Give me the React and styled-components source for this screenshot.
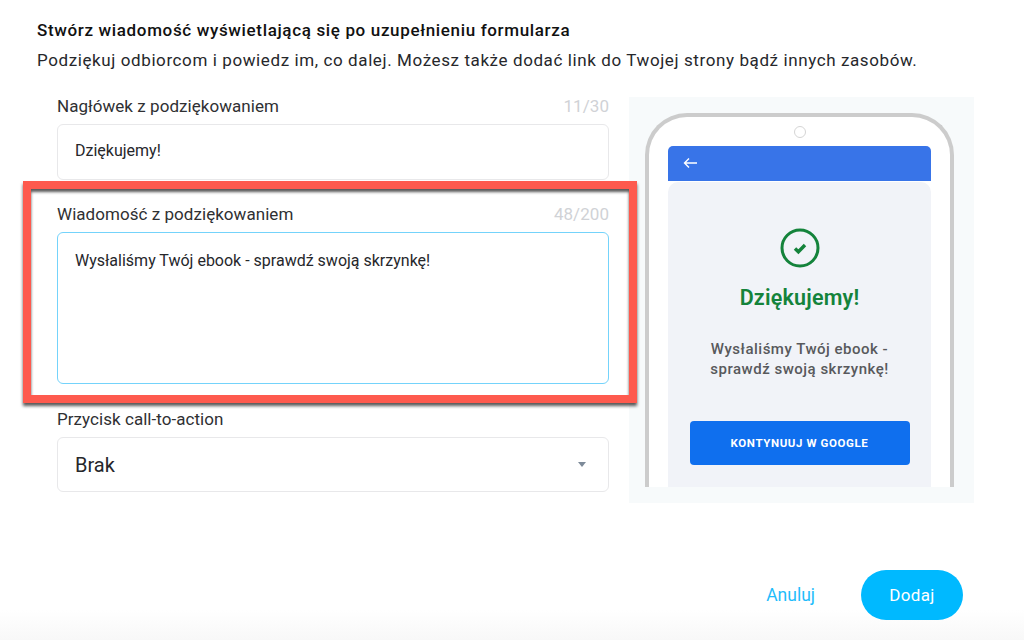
import React from 'react';
import styled, { createGlobalStyle } from 'styled-components';

const GlobalStyle = createGlobalStyle`
  html, body {
    margin: 0;
    padding: 0;
    background: #fff;
  }
  * {
    box-sizing: border-box;
  }
`;

const Page = styled.div`
  width: 1024px;
  height: 640px;
  overflow: hidden;
  padding: 20px 0 0 37px;
  display: flex;
  flex-direction: column;
  font-family: Roboto, "Liberation Sans", sans-serif;
  color: #1d1d1f;
  background: linear-gradient(to bottom, #fff 0, #fff 610px, #f8f8f8 640px);
`;

const Heading = styled.h1`
  margin: 0;
  font-size: 17px;
  line-height: 20px;
  font-weight: 500;
  color: #111;
  letter-spacing: 0.65px;
`;

const Intro = styled.p`
  margin: 10px 0 0;
  font-size: 17px;
  line-height: 20px;
  font-weight: 400;
  color: #26272b;
  letter-spacing: 0.6px;
`;

const Columns = styled.div`
  display: flex;
  align-items: flex-start;
  gap: 20px;
  margin: 27px 0 0 20px;
`;

const Form = styled.div`
  width: 552px;
  display: flex;
  flex-direction: column;
`;

const Field = styled.div`
  position: relative;
  margin-top: ${(p) => p.$top || 0}px;
`;

const LabelRow = styled.div`
  display: flex;
  justify-content: space-between;
  align-items: center;
  height: 18px;
  margin-bottom: 9px;
  font-size: 17px;
  letter-spacing: 0.05px;
  color: #2f3033;
`;

const Counter = styled.span`
  font-size: 17px;
  color: #d0d2d6;
`;

const Control = styled.div`
  width: 100%;
  height: ${(p) => p.$height}px;
  border: 1px solid ${(p) => (p.$focus ? '#74d3fb' : '#e8e8ea')};
  border-radius: 6px;
  padding: ${(p) => (p.$select ? '0 22px 0 17px' : `${p.$focus ? 18 : 16}px 17px 0`)};
  display: flex;
  justify-content: space-between;
  align-items: ${(p) => (p.$select ? 'center' : 'flex-start')};
  font-size: ${(p) => (p.$select ? '20px' : '16px')};
  line-height: 20px;
  color: #26272b;
  background: #fff;
`;

const Caret = styled.span`
  width: 0;
  height: 0;
  border-left: 4px solid transparent;
  border-right: 4px solid transparent;
  border-top: 5px solid #7d8a99;
`;

const Highlight = styled.div`
  position: absolute;
  left: -34px;
  right: -28px;
  top: -24px;
  height: 222px;
  border: 8px solid #fe5a4e;
  box-shadow: 0 3px 3px rgba(0, 0, 0, 0.65), inset 0 3px 3px rgba(0, 0, 0, 0.65);
  pointer-events: none;
`;

const Preview = styled.div`
  width: 345px;
  height: 406px;
  padding: 16px 16px 0;
  background: #f7fafb;
  flex-shrink: 0;
`;

const Phone = styled.div`
  width: 309px;
  height: 374px;
  padding: 9px 19px 0;
  background: #fff;
  border: 4px solid #cccccc;
  border-bottom: 0;
  border-radius: 42px 42px 0 0;
  display: flex;
  flex-direction: column;
  align-items: center;
`;

const Camera = styled.div`
  width: 12px;
  height: 12px;
  border-radius: 50%;
  border: 1px solid #d5d5d5;
  flex-shrink: 0;
`;

const AppBar = styled.div`
  width: 100%;
  height: 35px;
  margin-top: 8px;
  flex-shrink: 0;
  padding: 0 0 2px 15px;
  display: flex;
  align-items: center;
  background: #3874e8;
  border-radius: 5px 5px 0 0;
`;

const Screen = styled.div`
  width: 100%;
  flex: 1;
  margin-top: 1px;
  background: #f1f3f8;
  border-radius: 10px 10px 0 0;
  display: flex;
  flex-direction: column;
  align-items: center;
  padding-top: 46px;
`;

const ThanksTitle = styled.div`
  margin-top: 17px;
  font-size: 21.5px;
  line-height: 26px;
  font-weight: 600;
  color: #14833b;
  letter-spacing: 0.2px;
`;

const ThanksText = styled.div`
  margin-top: 28px;
  font-size: 15px;
  line-height: 20px;
  font-weight: 500;
  color: #58595c;
  text-align: center;
  letter-spacing: 0.5px;
`;

const CtaButton = styled.div`
  width: 220px;
  height: 44px;
  margin-top: 42px;
  flex-shrink: 0;
  display: flex;
  align-items: center;
  justify-content: center;
  border-radius: 4px;
  background: #0f6fee;
  color: #fff;
  font-size: 11.5px;
  font-weight: 700;
  letter-spacing: 0.6px;
`;

const Footer = styled.div`
  display: flex;
  align-items: center;
  justify-content: flex-end;
  gap: 46px;
  margin: 67px 61px 0 0;
`;

const CancelLink = styled.span`
  font-size: 17.5px;
  color: #1fbcfb;
`;

const AddButton = styled.div`
  width: 102px;
  height: 50px;
  border-radius: 25px;
  display: flex;
  align-items: center;
  justify-content: center;
  background: #00b9ff;
  color: #fff;
  font-size: 17px;
  letter-spacing: 0.3px;
`;

const fields = {
  title: 'Stwórz wiadomość wyświetlającą się po uzupełnieniu formularza',
  intro:
    'Podziękuj odbiorcom i powiedz im, co dalej. Możesz także dodać link do Twojej strony bądź innych zasobów.',
  message: 'Wysłaliśmy Twój ebook - sprawdź swoją skrzynkę!',
};

function BackArrow() {
  return (
    <svg width="15" height="12" viewBox="0 0 15 12" fill="none" stroke="#fff" strokeWidth="1.4">
      <path d="M14 6H1.5M6 1.5L1.5 6L6 10.5" />
    </svg>
  );
}

function CheckCircle() {
  return (
    <svg width="40" height="40" viewBox="0 0 40 40" fill="none">
      <circle cx="20" cy="20" r="18" stroke="#14833b" strokeWidth="3" />
      <path d="M15 20.5L18.4 23.8L25 17" stroke="#14833b" strokeWidth="3.4" />
    </svg>
  );
}

export default function App() {
  return (
    <Page>
      <GlobalStyle />
      <Heading>{fields.title}</Heading>
      <Intro>{fields.intro}</Intro>
      <Columns>
        <Form>
          <Field>
            <LabelRow>
              <span>Nagłówek z podziękowaniem</span>
              <Counter>11/30</Counter>
            </LabelRow>
            <Control $height={56}>Dziękujemy!</Control>
          </Field>
          <Field $top={25}>
            <Highlight />
            <LabelRow>
              <span>Wiadomość z podziękowaniem</span>
              <Counter>48/200</Counter>
            </LabelRow>
            <Control $height={152} $focus>
              {fields.message}
            </Control>
          </Field>
          <Field $top={26}>
            <LabelRow>
              <span>Przycisk call-to-action</span>
            </LabelRow>
            <Control $height={55} $select>
              Brak
              <Caret />
            </Control>
          </Field>
        </Form>
        <Preview>
          <Phone>
            <Camera />
            <AppBar>
              <BackArrow />
            </AppBar>
            <Screen>
              <CheckCircle />
              <ThanksTitle>Dziękujemy!</ThanksTitle>
              <ThanksText>
                Wysłaliśmy Twój ebook -
                <br />
                sprawdź swoją skrzynkę!
              </ThanksText>
              <CtaButton>KONTYNUUJ W GOOGLE</CtaButton>
            </Screen>
          </Phone>
        </Preview>
      </Columns>
      <Footer>
        <CancelLink>Anuluj</CancelLink>
        <AddButton>Dodaj</AddButton>
      </Footer>
    </Page>
  );
}
